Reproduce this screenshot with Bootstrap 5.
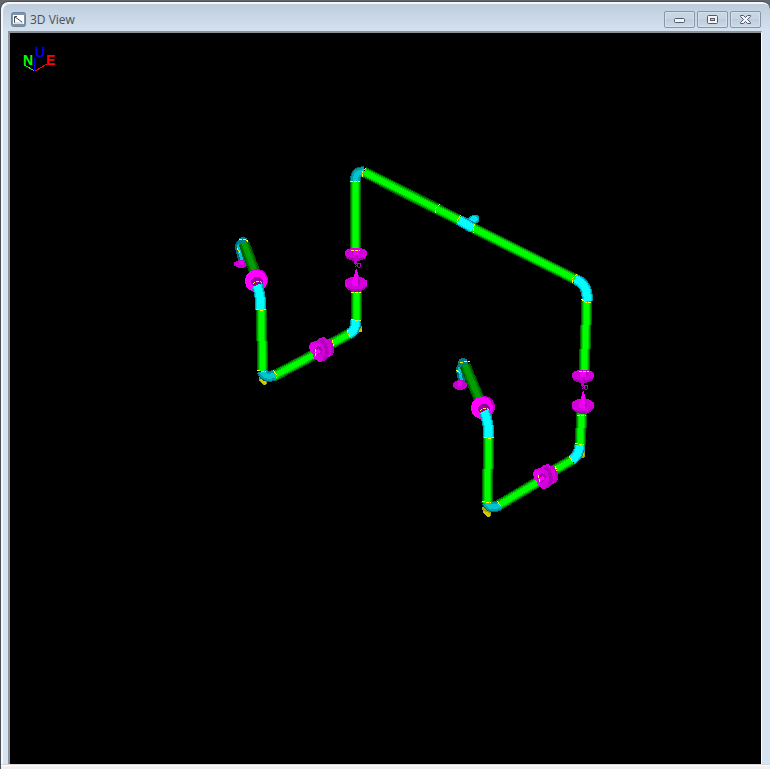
<!DOCTYPE html>
<html lang="en">
<head>
<meta charset="utf-8">
<meta name="viewport" content="width=device-width, initial-scale=1">
<title>3D View</title>
<link href="https://cdn.jsdelivr.net/npm/bootstrap@5.3.0/dist/css/bootstrap.min.css" rel="stylesheet">
<style>
body{background:#66676a;font-family:"Open Sans","Noto Sans",sans-serif;overflow:hidden}
.win{margin-top:1px;border:1px solid #4b5058;border-width:1px 0 0 1px;border-radius:8px 8px 0 0;background:linear-gradient(#bccbdb,#d5e2f0 30px,#d6e4f1 60px);box-shadow:inset 2px 2px #f4f8fb}
.titlebar{height:29px;padding:6px 9px 0 9px}
.caption{font-size:12px;line-height:16px;color:#465260}
.winbtns{gap:2px}
.winbtn{width:31px;height:17px;padding:0;border:1px solid #8795ab;border-radius:2px;background:linear-gradient(#c9d7e5,#c6d4e3 50%,#bdccdb 50%,#cddae8);box-shadow:inset 0 0 0 1px #d4e0ec;display:flex;align-items:center;justify-content:center}
.view{min-height:0;margin:0 8px 0 7px;border:2px solid #8d9298;border-right:1px solid #fff;border-bottom:0;background:#000}
.view svg{display:block;width:100%;height:100%}
.foot{height:5px;background:#f0f0f0;border-top:1px solid #d8d4d6;box-shadow:inset 0 1px #fff}
.axis{font:bold 14px "Liberation Sans",sans-serif}
.pipes,.bends{fill:none}
</style>
<script src="https://cdn.jsdelivr.net/npm/bootstrap@5.3.0/dist/js/bootstrap.bundle.min.js"></script>
</head>
<body class="vh-100 d-flex flex-column">
<main class="win flex-grow-1 d-flex flex-column">
<header class="titlebar d-flex align-items-center">
<svg width="16" height="15" viewBox="-1 0 16 15" aria-hidden="true"><rect x=".5" y=".5" width="14" height="14" rx="2" fill="#7d94ab" stroke="#6f869d"/><path d="M2 3h11v9H2z" fill="#fff"/><path d="M3.500 11V4.500H6M4 5l7 5" fill="none" stroke="#454b51"/><path d="M3 11h9" stroke="#b9c0c6"/></svg>
<h1 class="caption mb-0 ms-1 me-auto">3D View</h1>
<div class="winbtns d-flex">
<button type="button" class="winbtn" aria-label="Minimize"><svg width="13" height="11" viewBox="0 0 13 11"><rect x="1.500" y="4.500" width="10" height="4" rx="1" fill="#f4f4f4" stroke="#515b70"/></svg></button>
<button type="button" class="winbtn" aria-label="Maximize"><svg width="13" height="11" viewBox="0 0 13 11"><rect x="1.500" y="1.500" width="10" height="8" rx="1" fill="#f4f4f4" stroke="#515b70"/><rect x="4.500" y="4.500" width="4" height="2" fill="#b9c8d8" stroke="#515b70"/></svg></button>
<button type="button" class="winbtn" aria-label="Close"><svg width="13" height="11" viewBox="0 0 13 11"><path d="M1.500 1.500h3l2 2 2-2h3v1l-3 3 3 3v1h-3l-2-2-2 2h-3v-1l3-3-3-3z" fill="#f4f4f4" stroke="#515b70"/></svg></button>
</div>
</header>
<section class="view flex-grow-1 overflow-hidden">
<svg viewBox="10 33 751 731" shape-rendering="crispEdges" role="img" aria-label="Piping model">
<defs>
<path id="run" d="M261 309L263 371M274 376L317 353M329 345L349 334M356 320V289M355.500 250V181M364 172L459 220M473 228L575 279M587 301L584 374M582 412L580 445M572 460L553 471M541 480L499 505M489 437L487 503"/>
<path id="far" d="M244 243L256 275M465 365L480 401"/>
<path id="bend" d="M349 334Q356 331 356 320M459 220L473 228M575 279C585 283 588 291 587 301M580 445Q579 455 572 460"/>
<path id="darkbend" d="M262 371Q265 379 275 375M355.500 181Q355 171 364 172M487 502Q490 510 500 505"/>
<path id="ell" d="M257 285Q261 296 261 310M484 411Q489 422 489 438"/>
<g id="valve">
<ellipse cy="2" rx="11" ry="6" fill="#a800b0"/><ellipse rx="11.500" ry="5.500" fill="#d400dc"/>
<path d="M-4-3h8v5l-3 2v6l-1 3-2-3V4l-2-2z" fill="#c000c8"/><path d="M-3-3h6v5h-6z" fill="#f000f5"/>
<path d="M1 10l3 0 1 3-2 2-2-2zM-1 14l3-3" fill="none" stroke="#c000c8"/>
<ellipse cy="32" rx="11" ry="7" fill="#a800b0"/><ellipse cy="30" rx="11.500" ry="6.500" fill="#d400dc"/>
<path d="M0 14l2 6 2 9v4h-8v-4l3-9z" fill="#f000f5"/><path d="M2 20l2 9v4H2z" fill="#b500be"/>
</g>
<g id="coupling">
<path d="M-12-3L-10-7-5-8-2-11 3-12 6-10 11-9 13-4 13 3 11 7 7 8 4 12-2 13-6 10-7 6-11 2z" fill="#d400dc"/>
<path d="M-2-8L2-5 4 0 4 6 1 12 4 12 7 8 8 2 6-5 2-10zM6-10L10-5 11 2 9 7 11 7 13 2 12-4z" fill="#b000b8"/>
<path d="M-12-3l5-3 5 1 2 4-1 6-6 5-1-4-3-4z" fill="#e400ec"/>
<path d="M-8 1l4-4 4 1 1 4-5 5-3-1z" fill="#a800b0"/><path d="M-7 3l5-3 2 3-5 3z" fill="#ff00ff"/>
</g>
</defs>
<g class="axis"><path d="M24 65L35 71" stroke="#0f0"/><path d="M35 71L47 64" stroke="#f00"/><path d="M34.500 58V71" stroke="#00f"/>
<text x="23" y="65" fill="#0f0">N</text><text x="35" y="57" fill="#00f" font-weight="400" stroke="#00f" stroke-width=".4">U</text><text x="46" y="65" fill="#f00">E</text></g>
<g fill="#aaa000"><path d="M259 375h8v8l-2 2-2 0-4-4zM355 326h7v6l-6 1zM482 507h9v9l-3 1-5-4zM579 450l6 1v5l-2 2-5-1z"/></g>
<g fill="#d2c800"><path d="M260 379l6 1v4l-2 1-4-4zM357 329h5v3h-5zM483 511l7 2v3l-2 1-5-4zM581 452h3v4h-3z"/></g>
<g class="bends"><path d="M243 242Q237 244 239 250L241 257V263M465 364Q458 366 460 373L461 378V384" stroke="#006d78" stroke-width="7"/><path d="M243 242Q237 244 239 250L241 257V263M465 364Q458 366 460 373L461 378V384" stroke="#00c3d0" stroke-width="3"/></g>
<g fill="#c400cc"><ellipse cx="241" cy="264" rx="7" ry="4"/><ellipse cx="460" cy="385" rx="7" ry="5"/></g>
<g fill="#e600ed"><path d="M239 261h5v4h-5zM458 381h4v5h-4z"/></g>
<g fill="#007f8b"><circle cx="243" cy="242" r="5"/><circle cx="463" cy="363" r="5"/></g>
<g class="pipes"><use href="#far" stroke="#005800" stroke-width="11"/><use href="#far" stroke="#007f00" stroke-width="8"/><use href="#far" stroke="#00a000" stroke-width="5"/>
<use href="#run" stroke="#006000" stroke-width="11"/><use href="#run" stroke="#00a000" stroke-width="9"/><use href="#run" stroke="#00d800" stroke-width="7"/><use href="#run" stroke="#00ff00" stroke-width="5"/></g>
<path d="M466 219L473 215h4l2 2v4l-2 2-5 2z" fill="#00a0ae"/><path d="M467 221L473 216h3l2 3-3 3-5 2z" fill="#00e5f5"/>
<g class="bends"><use href="#darkbend" stroke="#006570" stroke-width="11"/><use href="#darkbend" stroke="#009ca8" stroke-width="9"/><use href="#darkbend" stroke="#00c6d2" stroke-width="5"/>
<use href="#bend" stroke="#008b98" stroke-width="11"/><use href="#bend" stroke="#00d2df" stroke-width="9"/><use href="#bend" stroke="#00ffff" stroke-width="7"/></g>
<g fill="#b000b8"><circle cx="257" cy="280" r="11"/><circle cx="484" cy="407" r="11"/></g>
<g fill="#ff00ff"><circle cx="256" cy="281" r="11"/><circle cx="482" cy="408" r="11"/></g>
<g fill="#98009d"><ellipse cx="257" cy="282" rx="6" ry="5"/><ellipse cx="484" cy="409" rx="6" ry="5"/></g>
<g class="bends"><use href="#ell" stroke="#009aa8" stroke-width="11"/><use href="#ell" stroke="#00d8e4" stroke-width="9"/><use href="#ell" stroke="#00ffff" stroke-width="7"/></g>
<use href="#valve" x="356" y="253"/><use href="#valve" x="583" y="375"/>
<use href="#coupling" x="321" y="349"/><use href="#coupling" x="545" y="476"/>
<g fill="none" stroke="#ff0" stroke-dasharray="3 1"><path d="M256 309l3 1h5l2-1M253 284l3-3h4l2 2M480 411l3-3h4l2 2M484 437l3 1h5l2-1M257 370l4 1h5M273 370l4 5-1 3M315 349l1 8M332 340l2 6M347 330l3 8M351 319l4 1h6M351 292h10M350 181h10M366 168l-4 4v5M351 250h9M440 204l-5 5v5M461 215l-4 5v3M475 224l-2 4v5M577 274l-5 5v4M581 299l4 3h6M579 371h10M577 415h9M575 443l3 1h6M569 456l4 7M555 466l2 5M538 475l2 7M497 501l4 5M482 501l4 1h5M239 240l7-1 2 3M237 248l3 5M460 363l6-2h4M456 370l4 3"/></g>
</svg>
</section>
<div class="foot"></div>
</main>
</body>
</html>
